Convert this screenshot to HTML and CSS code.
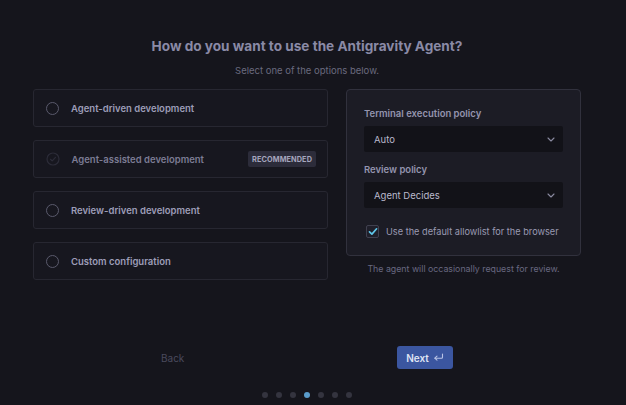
FILE: index.html
```html
<!DOCTYPE html>
<html>
<head>
<meta charset="utf-8">
<link rel="stylesheet" href="styles.css">
</head>
<body>
<div class="page">
  <h1 class="title">How do you want to use the Antigravity Agent?</h1>
  <p class="subtitle">Select one of the options below.</p>
  <div class="columns">
    <div class="options">
      <div class="option"><span class="radio"></span><span class="opt-label">Agent-driven development</span></div>
      <div class="option dim">
        <svg class="check-icon" width="14" height="14" viewBox="0 0 14 14"><circle cx="7" cy="7" r="6" fill="none" stroke="#2c2c38" stroke-width="1.2"/><path d="M4.5 7.3l1.7 1.6 3.3-3.6" fill="none" stroke="#2c2c38" stroke-width="1.2" stroke-linecap="round" stroke-linejoin="round"/></svg>
        <span class="opt-label">Agent-assisted development</span>
        <span class="badge">RECOMMENDED</span>
      </div>
      <div class="option"><span class="radio"></span><span class="opt-label">Review-driven development</span></div>
      <div class="option"><span class="radio"></span><span class="opt-label">Custom configuration</span></div>
    </div>
    <div class="side">
      <div class="panel">
        <div class="field-label">Terminal execution policy</div>
        <div class="select"><span>Auto</span><svg width="8" height="5" viewBox="0 0 8 5"><path d="M1 1l3 3 3-3" fill="none" stroke="#8a8aa0" stroke-width="1.1" stroke-linecap="round" stroke-linejoin="round"/></svg></div>
        <div class="field-label second">Review policy</div>
        <div class="select"><span>Agent Decides</span><svg width="8" height="5" viewBox="0 0 8 5"><path d="M1 1l3 3 3-3" fill="none" stroke="#8a8aa0" stroke-width="1.1" stroke-linecap="round" stroke-linejoin="round"/></svg></div>
        <div class="check-row">
          <span class="checkbox"><svg width="10" height="9" viewBox="0 0 10 9"><path d="M1.5 4.8l2.4 2.3L8.6 1.8" fill="none" stroke="#5ec6ea" stroke-width="1.7" stroke-linecap="round" stroke-linejoin="round"/></svg></span>
          <span class="check-text">Use the default allowlist for the browser</span>
        </div>
      </div>
      <p class="note">The agent will occasionally request for review.</p>
    </div>
  </div>
  <div class="footer">
    <span class="back">Back</span>
    <button class="next">Next <svg width="11" height="9" viewBox="0 0 11 9"><path d="M9.5 1v3.2a1 1 0 0 1-1 1H2" fill="none" stroke="#b9c3e6" stroke-width="1.1" stroke-linecap="round"/><path d="M4 3.2L1.8 5.2 4 7.2" fill="none" stroke="#b9c3e6" stroke-width="1.1" stroke-linecap="round" stroke-linejoin="round"/></svg></button>
  </div>
  <div class="dots">
    <span class="dot"></span><span class="dot"></span><span class="dot"></span><span class="dot active"></span><span class="dot"></span><span class="dot"></span><span class="dot"></span>
  </div>
</div>
</body>
</html>
```

FILE: styles.css
```css
* { box-sizing: border-box; }
html, body { margin: 0; padding: 0; }
body {
  background: #15151c;
  font-family: Inter, "Noto Sans", sans-serif;
  width: 626px;
  height: 405px;
  overflow: hidden;
}
.page {
  width: 548px;
  margin-left: 33px;
  padding-top: 38px;
}
.title {
  margin: 0;
  text-align: center;
  font-size: 13.6px;
  line-height: 16px;
  font-weight: 700;
  color: #8a8aa6;
}
.subtitle {
  margin: 11px 0 0;
  text-align: center;
  font-size: 9.5px;
  line-height: 12px;
  color: #6a6a7e;
}
.columns {
  display: flex;
  gap: 18px;
  margin-top: 12px;
  align-items: flex-start;
}
.options {
  width: 295px;
  display: flex;
  flex-direction: column;
  gap: 13px;
}
.option {
  height: 38px;
  border: 1px solid #272731;
  border-radius: 3px;
  background: #17171f;
  display: flex;
  align-items: center;
  padding: 0 11px 0 12px;
}
.radio {
  width: 13px;
  height: 13px;
  border-radius: 50%;
  border: 1.3px solid #5a5a6c;
  flex: none;
}
.check-icon { flex: none; margin-left: -0.5px; }
.opt-label {
  margin-left: 12px;
  font-size: 9.5px;
  font-weight: 600;
  color: #9d9db8;
}
.dim .opt-label { color: #7c7c94; }
.badge {
  margin-left: auto;
  height: 16px;
  padding: 0 4px;
  display: flex;
  align-items: center;
  background: #2c2c3a;
  border-radius: 2px;
  font-size: 7.3px;
  font-weight: 700;
  letter-spacing: 0.1px;
  color: #a6a6be;
}
.side { width: 235px; }
.panel {
  border: 1px solid #31313d;
  border-radius: 4px;
  background: #1c1c25;
  padding: 17px 17px 17px;
}
.field-label {
  font-size: 9.5px;
  line-height: 14px;
  font-weight: 600;
  color: #9494ae;
}
.field-label.second { margin-top: 11px; }
.select {
  margin-top: 5px;
  height: 26px;
  background: #121218;
  border-radius: 2px;
  display: flex;
  align-items: center;
  justify-content: space-between;
  padding: 0 8px 0 10px;
  font-size: 9.5px;
  color: #b9b9cc;
}
.check-row {
  margin-top: 16px;
  display: flex;
  align-items: center;
  padding-left: 2px;
  height: 14px;
}
.checkbox {
  width: 13px;
  height: 13px;
  border: 1px solid #40404f;
  border-radius: 2px;
  background: #1f1f2a;
  display: flex;
  align-items: center;
  justify-content: center;
  flex: none;
}
.check-text {
  margin-left: 7px;
  font-size: 9.2px;
  white-space: nowrap;
  color: #9a9ab2;
}
.note {
  margin: 7px 0 0;
  text-align: center;
  font-size: 8.8px;
  line-height: 12px;
  color: #686880;
}
.footer {
  width: 292px;
  margin: 66px auto 0;
  display: flex;
  justify-content: space-between;
  align-items: center;
}
.back {
  font-size: 10px;
  color: #4a4a5c;
}
.next {
  width: 56px;
  height: 23px;
  border: none;
  border-radius: 3px;
  background: #3b56a0;
  color: #dfe4f4;
  font-family: Inter, "Noto Sans", sans-serif;
  font-size: 10px;
  font-weight: 600;
  display: flex;
  align-items: center;
  justify-content: center;
  gap: 4px;
  padding: 0;
}
.dots {
  margin-top: 23px;
  display: flex;
  justify-content: center;
  gap: 8px;
}
.dot {
  width: 6px;
  height: 6px;
  border-radius: 50%;
  background: #34343f;
}
.dot.active { background: #5a9ccb; }
```
